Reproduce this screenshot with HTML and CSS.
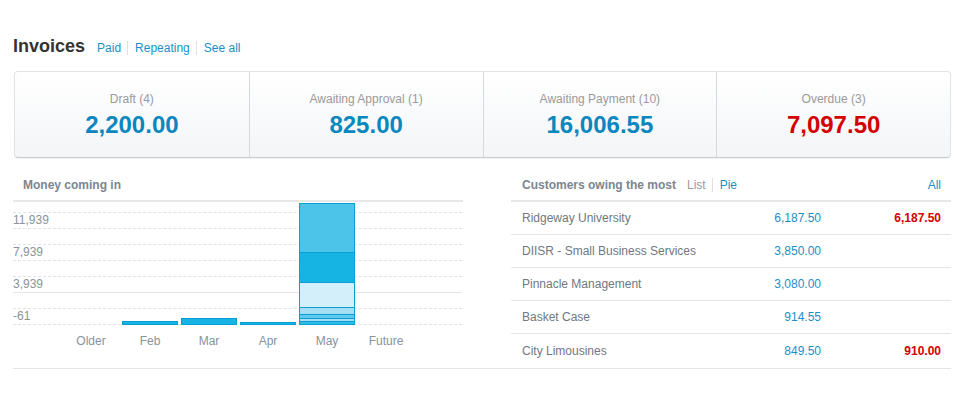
FILE: index.html
```html
<!DOCTYPE html>
<html lang="en">
<head>
    <meta charset="UTF-8">
    <title>Invoices</title>
    <link rel="stylesheet" href="styles.css">
</head>
<body>
    <div class="page">
        <div class="title-row">
            <h1>Invoices</h1>
            <nav class="links">
                <a href="#">Paid</a><span class="sep"></span><a href="#">Repeating</a><span class="sep"></span><a href="#">See all</a>
            </nav>
        </div>

        <div class="summary">
            <div class="summary-cell">
                <div class="label">Draft (4)</div>
                <div class="value">2,200.00</div>
            </div>
            <div class="summary-cell">
                <div class="label">Awaiting Approval (1)</div>
                <div class="value">825.00</div>
            </div>
            <div class="summary-cell">
                <div class="label">Awaiting Payment (10)</div>
                <div class="value">16,006.55</div>
            </div>
            <div class="summary-cell">
                <div class="label">Overdue (3)</div>
                <div class="value overdue">7,097.50</div>
            </div>
        </div>

        <div class="panels">
            <section class="money">
                <h2 class="panel-title">Money coming in</h2>
                <div class="chart">
                    <div class="gridlines">
                        <div class="gl gl-first"></div>
                        <div class="gl"><span>11,939</span></div>
                        <div class="gl"></div>
                        <div class="gl"><span>7,939</span></div>
                        <div class="gl"></div>
                        <div class="gl solid"><span>3,939</span></div>
                        <div class="gl"></div>
                        <div class="gl"><span>-61</span></div>
                    </div>
                    <div class="bars">
                        <div class="col"></div>
                        <div class="col"><div class="bar" style="height: 4px"></div></div>
                        <div class="col"><div class="bar" style="height: 7px"></div></div>
                        <div class="col"><div class="bar" style="height: 3px"></div></div>
                        <div class="col">
                            <div class="bar stack">
                                <div class="seg s1" style="height: 48px"></div>
                                <div class="seg s2" style="height: 29px"></div>
                                <div class="seg s3" style="height: 24px"></div>
                                <div class="seg s4" style="height: 6px"></div>
                                <div class="seg s5" style="height: 3px"></div>
                                <div class="seg s6" style="height: 2px"></div>
                                <div class="seg s7" style="height: 2px"></div>
                            </div>
                        </div>
                        <div class="col"></div>
                    </div>
                </div>
                <div class="months">
                    <span>Older</span><span>Feb</span><span>Mar</span><span>Apr</span><span>May</span><span>Future</span>
                </div>
            </section>

            <section class="owing">
                <div class="owing-head">
                    <h2 class="panel-title">Customers owing the most</h2>
                    <span class="views"><span class="muted">List</span><span class="sep"></span><a href="#">Pie</a></span>
                    <a href="#" class="all">All</a>
                </div>
                <ul class="owing-list">
                    <li><span class="name">Ridgeway University</span><span class="amt">6,187.50</span><span class="due">6,187.50</span></li>
                    <li><span class="name">DIISR - Small Business Services</span><span class="amt">3,850.00</span><span class="due"></span></li>
                    <li><span class="name">Pinnacle Management</span><span class="amt">3,080.00</span><span class="due"></span></li>
                    <li><span class="name">Basket Case</span><span class="amt">914.55</span><span class="due"></span></li>
                    <li><span class="name">City Limousines</span><span class="amt">849.50</span><span class="due">910.00</span></li>
                </ul>
            </section>
        </div>
    </div>
</body>
</html>
```

FILE: styles.css
```css
body {
    margin: 0;
    font-family: "Liberation Sans", Arial, sans-serif;
    background-color: #ffffff;
    color: #333;
}
a {
    color: #1a8fc6;
    text-decoration: none;
}
.page {
    padding: 35px 16px 0 13px;
    width: 938px;
}
.title-row {
    display: flex;
    align-items: baseline;
    height: 22px;
}
.title-row h1 {
    margin: 0;
    font-size: 18px;
    line-height: 22px;
    font-weight: bold;
    color: #333;
}
.links {
    display: flex;
    align-items: center;
    margin-left: 12px;
    font-size: 12px;
}
.sep {
    display: inline-block;
    width: 1px;
    height: 14px;
    background-color: #dde1e4;
    margin: 0 7px 0 6px;
}
.summary {
    display: grid;
    grid-template-columns: repeat(4, 1fr);
    margin: 14px 0 0 1px;
    width: 937px;
    height: 87px;
    box-sizing: border-box;
    border: 1px solid #e1e4e7;
    border-bottom-color: #c9cccf;
    border-radius: 4px;
    background: linear-gradient(#ffffff, #f3f5f7);
    box-shadow: 0 1px 1px rgba(0, 0, 0, 0.05);
}
.summary-cell {
    text-align: center;
    padding-top: 19px;
    border-left: 1px solid #d6d9dc;
}
.summary-cell:first-child {
    border-left: none;
}
.summary-cell .label {
    font-size: 12px;
    line-height: 16px;
    color: #9a9a9a;
}
.summary-cell .value {
    margin-top: 4px;
    font-size: 24px;
    line-height: 28px;
    font-weight: bold;
    color: #0b87bf;
}
.summary-cell .value.overdue {
    color: #d40000;
}
.panels {
    display: grid;
    grid-template-columns: 450px 440px;
    column-gap: 48px;
    margin-top: 19px;
    border-bottom: 1px solid #e3e5e7;
}
.panel-title {
    margin: 0;
    font-size: 12px;
    line-height: 16px;
    font-weight: bold;
    color: #7c858f;
}
.money .panel-title {
    padding: 0 0 7px 10px;
    border-bottom: 2px solid #e6e7e8;
}
.chart {
    position: relative;
    height: 123px;
}
.gridlines {
    position: absolute;
    top: 0;
    left: 0;
    right: 1px;
}
.gl {
    height: 15px;
    border-bottom: 1px dashed #e0e2e4;
    font-size: 12px;
    line-height: 15px;
    color: #8a929b;
}
.gl-first {
    height: 10px;
}
.gl.solid {
    border-bottom-style: solid;
    border-bottom-color: #e4e6e8;
}
.bars {
    position: absolute;
    top: 0;
    bottom: 0;
    left: 50px;
    display: flex;
    align-items: flex-end;
    gap: 3px;
}
.col {
    width: 56px;
    height: 100%;
    display: flex;
    align-items: flex-end;
}
.bar {
    width: 100%;
    box-sizing: border-box;
    background-color: #15b4e2;
    border: 1px solid #0a9ed6;
}
.bar.stack {
    display: flex;
    flex-direction: column;
    background: none;
}
.seg {
    border-top: 1px solid #0a9ed6;
}
.seg.s1 {
    border-top: none;
    background-color: #4cc4e9;
}
.seg.s2 { background-color: #15b4e2; }
.seg.s3 { background-color: #d3f0fa; }
.seg.s4 { background-color: #a4dff3; }
.seg.s5 { background-color: #5fcaed; }
.seg.s6 { background-color: #a4dff3; }
.seg.s7 { background-color: #2fbce6; }
.months {
    display: flex;
    gap: 3px;
    margin: 8px 0 0 50px;
    height: 35px;
    font-size: 12px;
    line-height: 16px;
    color: #8a929b;
}
.months span {
    width: 56px;
    text-align: center;
}
.owing-head {
    display: flex;
    align-items: center;
    padding: 0 10px 7px 11px;
    border-bottom: 2px solid #e6e7e8;
    font-size: 12px;
    line-height: 16px;
}
.views {
    display: flex;
    align-items: center;
    margin-left: 11px;
}
.muted {
    color: #9a9a9a;
}
.all {
    margin-left: auto;
}
.owing-list {
    list-style: none;
    margin: 0;
    padding: 0;
}
.owing-list li {
    display: flex;
    align-items: center;
    height: 32px;
    padding: 0 10px 0 11px;
    border-bottom: 1px solid #e3e5e7;
    font-size: 12px;
}
.owing-list li:last-child {
    height: 34px;
    border-bottom: none;
}
.owing-list .name {
    flex: 1;
    color: #6f7881;
}
.owing-list .amt {
    width: 100px;
    text-align: right;
    color: #1a8fc6;
}
.owing-list .due {
    width: 120px;
    text-align: right;
    font-weight: bold;
    color: #d40000;
}
```
